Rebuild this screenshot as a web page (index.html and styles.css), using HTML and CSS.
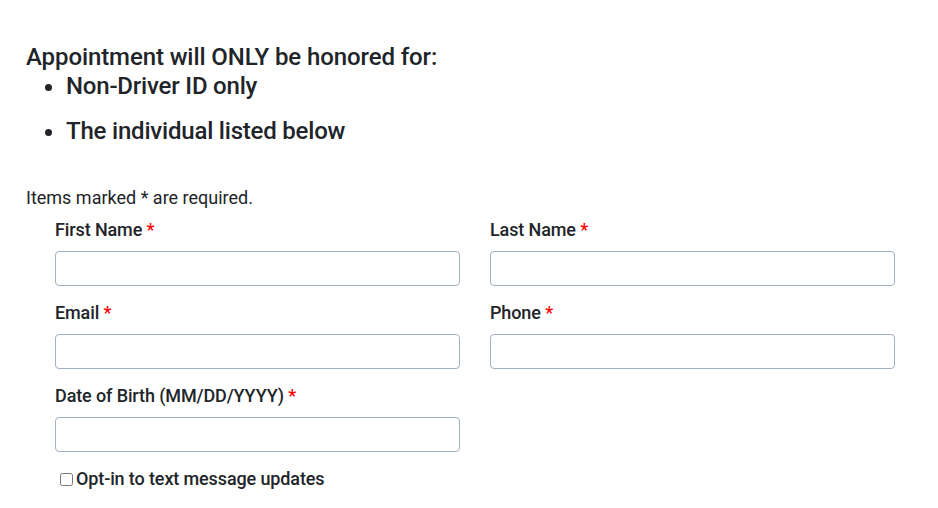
FILE: index.html
```html
<!DOCTYPE html>
<html lang="en">
<head>
    <meta charset="UTF-8">
    <meta name="viewport" content="width=device-width, initial-scale=1.0">
    <title>Appointment</title>
    <link rel="stylesheet" href="styles.css">
</head>
<body>

    <div class="page">
        <!-- notice -->
        <div class="notice">
            <h2>Appointment will ONLY be honored for:</h2>
            <ul>
                <li>Non-Driver ID only</li>
                <li>The individual listed below</li>
            </ul>
        </div>

        <p class="required-note">Items marked * are required.</p>

        <!-- contact form -->
        <form class="form-grid">
            <div class="form-group">
                <label for="first">First Name <span class="req">*</span></label>
                <input type="text" id="first">
            </div>
            <div class="form-group">
                <label for="last">Last Name <span class="req">*</span></label>
                <input type="text" id="last">
            </div>
            <div class="form-group">
                <label for="email">Email <span class="req">*</span></label>
                <input type="email" id="email">
            </div>
            <div class="form-group">
                <label for="phone">Phone <span class="req">*</span></label>
                <input type="tel" id="phone">
            </div>
            <div class="form-group">
                <label for="dob">Date of Birth (MM/DD/YYYY) <span class="req">*</span></label>
                <input type="text" id="dob">
            </div>
            <div class="form-group"></div>
            <div class="check-row">
                <input type="checkbox" id="optin">
                <label for="optin">Opt-in to text message updates</label>
            </div>
        </form>
    </div>

</body>
</html>
```

FILE: styles.css
```css
/* page basics */
body {
    font-family: Roboto, "Liberation Sans", Arial, sans-serif;
    margin: 0;
    padding: 0;
    color: #212529;
    background-color: #fff;
}

.page {
    padding: 43px 28px 0 26px;
}

.notice h2 {
    font-size: 24px;
    font-weight: 500;
    line-height: 28px;
    margin: 0;
    letter-spacing: -0.1px;
}

.notice ul {
    margin: 0;
    padding-left: 40px;
}

.notice li {
    font-size: 24px;
    font-weight: 500;
    line-height: 30px;
    margin-bottom: 15px;
    letter-spacing: -0.2px;
}

.required-note {
    font-size: 18px;
    line-height: 24px;
    margin: 40px 0 8px 0;
}

.form-grid {
    display: grid;
    grid-template-columns: 405px 405px;
    column-gap: 30px;
    margin-left: 29px;
}

.form-group {
    margin-bottom: 15px;
}

.form-group label {
    display: block;
    font-size: 18px;
    font-weight: 500;
    line-height: 24px;
    margin-bottom: 9px;
    letter-spacing: -0.12px;
}

.req {
    color: #f00;
}

.form-group input {
    display: block;
    box-sizing: border-box;
    width: 100%;
    height: 35px;
    border: 1px solid #a3afc2;
    border-radius: 4px;
    padding: 6px 12px;
    font-size: 16px;
}

.check-row {
    display: flex;
    align-items: center;
    gap: 3px;
    margin-left: 5px;
}

.check-row input {
    width: 13px;
    height: 13px;
    margin: 0;
}

.check-row label {
    font-size: 18px;
    font-weight: 500;
    line-height: 24px;
    letter-spacing: -0.12px;
}
```
